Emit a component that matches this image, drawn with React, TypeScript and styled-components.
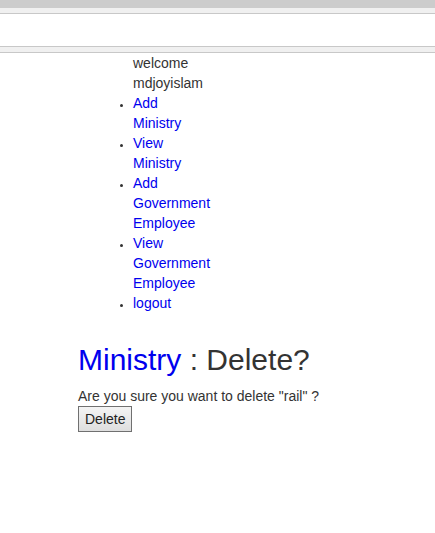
import React from "react";
import styled, { createGlobalStyle } from "styled-components";

const Global = createGlobalStyle`
  html, body {
    margin: 0;
    padding: 0;
    background: #ffffff;
  }
  body {
    font-family: "Liberation Sans", Arial, sans-serif;
    font-size: 14px;
    line-height: 20px;
    color: #333333;
  }
  a {
    color: #0000ee;
    text-decoration: none;
  }
`;

const Header = styled.header`
  display: flex;
  flex-direction: column;
`;

const TopStrip = styled.div`
  height: 8px;
  background: #cccccc;
`;

const Band = styled.div<{ $top?: boolean; $bottom?: boolean }>`
  height: 5px;
  background: #f0f0f0;
  border-top: ${(p) => (p.$top ? "1px solid #c8c8c8" : "none")};
  border-bottom: ${(p) => (p.$bottom ? "1px solid #c8c8c8" : "none")};
`;

const Blank = styled.div`
  height: 32px;
  background: #ffffff;
`;

const Main = styled.main`
  padding-left: 78px;
`;

const NavList = styled.ul`
  width: min-content;
  margin: 0 0 10px 15px;
  padding: 0 0 0 40px;
  list-style: disc;
  word-spacing: 2px;
`;

const NavItem = styled.li<{ $plain?: boolean }>`
  list-style-type: ${(p) => (p.$plain ? "none" : "disc")};
  &::marker {
    font-size: 11px;
    color: #333333;
  }
`;

const Title = styled.h1`
  margin: 30px 0 10px;
  font-size: 30px;
  line-height: 33px;
  font-weight: 400;
  color: #333333;
`;

const Question = styled.p`
  margin: 0;
`;

const DeleteButton = styled.button`
  display: block;
  box-sizing: border-box;
  height: 26px;
  font-family: "Liberation Sans", Arial, sans-serif;
  font-size: 14px;
  line-height: 20px;
  color: #222222;
  padding: 2px 6px;
  border: 1px solid #707070;
  border-radius: 0;
  background: linear-gradient(#f4f4f4, #dedede);
`;

export default function App() {
  return (
    <>
      <Global />
      <Header>
        <TopStrip />
        <Band $bottom />
        <Blank />
        <Band $top $bottom />
      </Header>
      <Main>
        <NavList>
          <NavItem $plain>welcome mdjoyislam</NavItem>
          <NavItem>
            <a href="#">Add Ministry</a>
          </NavItem>
          <NavItem>
            <a href="#">View Ministry</a>
          </NavItem>
          <NavItem>
            <a href="#">Add Government Employee</a>
          </NavItem>
          <NavItem>
            <a href="#">View Government Employee</a>
          </NavItem>
          <NavItem>
            <a href="#">logout</a>
          </NavItem>
        </NavList>
        <Title>
          <a href="#">Ministry</a> : Delete?
        </Title>
        <Question>Are you sure you want to delete "rail" ?</Question>
        <DeleteButton type="button">Delete</DeleteButton>
      </Main>
    </>
  );
}
